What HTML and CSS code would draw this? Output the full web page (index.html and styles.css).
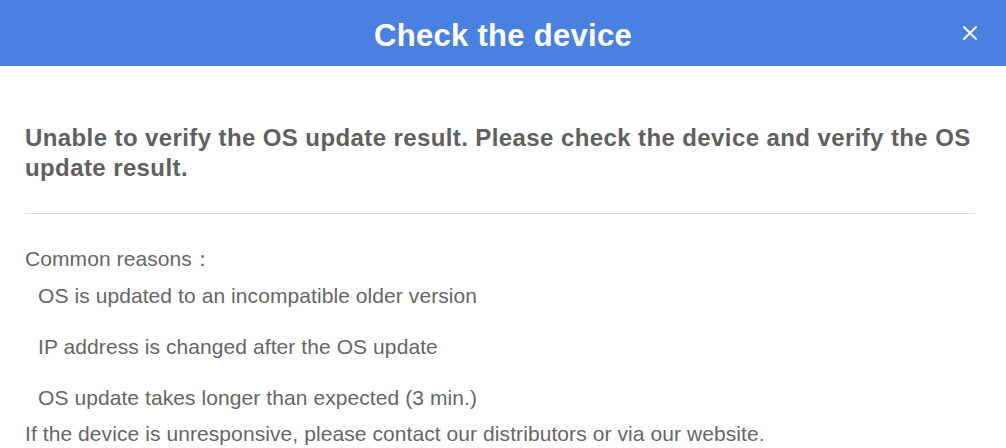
FILE: index.html
```html
<!DOCTYPE html>
<html lang="en">

<head>
    <meta charset="UTF-8">
    <meta name="viewport" content="width=device-width, initial-scale=1.0">
    <title>Check the device</title>
    <link rel="stylesheet" href="styles.css">
</head>

<body>
    <div class="dialog">
        <div class="dialog-header">
            <h1>Check the device</h1>
            <button class="close-btn" aria-label="Close">
                <svg width="14" height="14" viewBox="0 0 14 14">
                    <path d="M1 1L13 13M13 1L1 13" stroke="#fff" stroke-width="1.8" stroke-linecap="round" />
                </svg>
            </button>
        </div>

        <div class="dialog-body">
            <p class="message">Unable to verify the OS update result. Please check the device and verify the OS update result.</p>
            <hr class="divider">
            <div class="reasons">
                <div class="reasons-title">Common reasons：</div>
                <ul class="reason-list">
                    <li>OS is updated to an incompatible older version</li>
                    <li>IP address is changed after the OS update</li>
                    <li>OS update takes longer than expected (3 min.)</li>
                </ul>
                <p class="contact">If the device is unresponsive, please contact our distributors or via our website.</p>
            </div>
        </div>
    </div>
</body>
</html>
```

FILE: styles.css
```css
* {
    margin: 0;
    padding: 0;
    box-sizing: border-box;
}

body {
    font-family: 'Liberation Sans', Arial, sans-serif;
    background: #fff;
    color: #666;
    overflow: hidden;
}

.dialog {
    width: 1006px;
    height: 448px;
    background: #fff;
}

.dialog-header {
    position: relative;
    height: 66px;
    padding-top: 5px;
    background: #4a80df;
    display: flex;
    align-items: center;
    justify-content: center;
}

.dialog-header h1 {
    color: #fff;
    font-size: 31px;
    font-weight: 700;
    letter-spacing: 0.3px;
}

.close-btn {
    position: absolute;
    right: 29px;
    top: 26px;
    width: 14px;
    height: 14px;
    border: none;
    background: none;
    display: flex;
    cursor: pointer;
}

.dialog-body {
    padding: 57px 31px 0 25px;
}

.message {
    font-size: 24px;
    font-weight: 700;
    line-height: 30px;
    letter-spacing: 0.4px;
    color: #606060;
}

.divider {
    border: none;
    border-top: 1px solid #dcdcdc;
    margin-top: 30px;
}

.reasons {
    padding-top: 34px;
    font-size: 21px;
    letter-spacing: 0.08px;
}

.reasons-title,
.contact {
    line-height: 22px;
}

.reason-list {
    list-style: none;
    padding-left: 13px;
}

.reason-list li {
    line-height: 51px;
}
```
